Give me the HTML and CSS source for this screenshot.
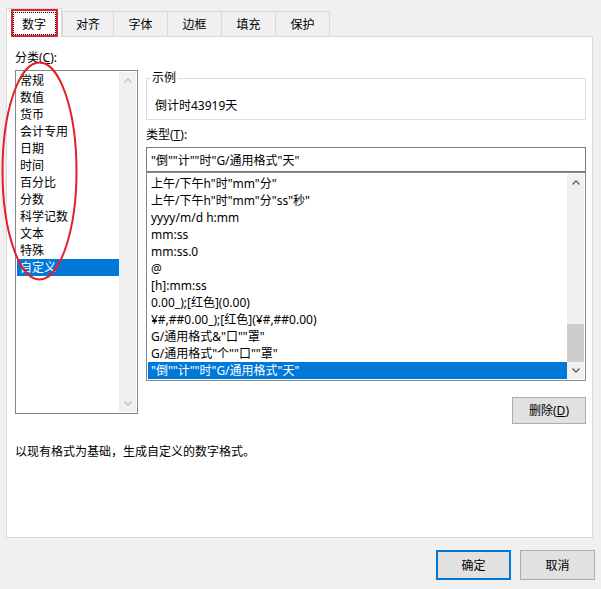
FILE: index.html
```html
<!DOCTYPE html>
<html lang="zh-CN">
<head>
    <meta charset="UTF-8"/>
    <title>设置单元格格式</title>
    <link rel="stylesheet" href="styles.css">
</head>
<body>

<div class="dialog">
    <div class="tabs">
        <div class="tab active">
            数字
            <span class="focus-rect"></span>
            <span class="mark-rect"></span>
        </div>
        <div class="tab">对齐</div>
        <div class="tab">字体</div>
        <div class="tab">边框</div>
        <div class="tab">填充</div>
        <div class="tab">保护</div>
    </div>

    <div class="panel">
        <div class="field-label cat-label">分类(<u>C</u>):</div>
        <div class="panel-body">
            <div class="listbox category-list">
                <ul class="items">
                    <li>常规</li>
                    <li>数值</li>
                    <li>货币</li>
                    <li>会计专用</li>
                    <li>日期</li>
                    <li>时间</li>
                    <li>百分比</li>
                    <li>分数</li>
                    <li>科学记数</li>
                    <li>文本</li>
                    <li>特殊</li>
                    <li class="selected">自定义</li>
                </ul>
                <div class="scrollbar disabled">
                    <div class="sb-btn">
                        <svg width="8" height="5" viewBox="0 0 8 5"><polyline points="0.5,4.5 4,1 7.5,4.5"/></svg>
                    </div>
                    <div class="sb-track"></div>
                    <div class="sb-btn">
                        <svg width="8" height="5" viewBox="0 0 8 5"><polyline points="0.5,0.5 4,4 7.5,0.5"/></svg>
                    </div>
                </div>
            </div>

            <div class="right-col">
                <fieldset class="sample">
                    <legend>示例</legend>
                    <div class="sample-text">倒计时43919天</div>
                </fieldset>

                <div class="field-label type-label">类型(<u>T</u>):</div>
                <input class="type-input" type="text" value='"倒""计""时"G/通用格式"天"'/>

                <div class="listbox type-list">
                    <ul class="items">
                        <li>上午/下午h"时"mm"分"</li>
                        <li>上午/下午h"时"mm"分"ss"秒"</li>
                        <li>yyyy/m/d h:mm</li>
                        <li>mm:ss</li>
                        <li>mm:ss.0</li>
                        <li>@</li>
                        <li>[h]:mm:ss</li>
                        <li>0.00_);[红色](0.00)</li>
                        <li>¥#,##0.00_);[红色](¥#,##0.00)</li>
                        <li>G/通用格式&amp;"口""罩"</li>
                        <li>G/通用格式"个""口""罩"</li>
                        <li class="selected">"倒""计""时"G/通用格式"天"</li>
                    </ul>
                    <div class="scrollbar">
                        <div class="sb-btn">
                            <svg width="8" height="5" viewBox="0 0 8 5"><polyline points="0.5,4.5 4,1 7.5,4.5"/></svg>
                        </div>
                        <div class="sb-track"></div>
                        <div class="sb-thumb"></div>
                        <div class="sb-btn">
                            <svg width="8" height="5" viewBox="0 0 8 5"><polyline points="0.5,0.5 4,4 7.5,0.5"/></svg>
                        </div>
                    </div>
                </div>

                <div class="delete-row">
                    <button class="btn" type="button">删除(<u>D</u>)</button>
                </div>
            </div>
        </div>

        <p class="hint">以现有格式为基础，生成自定义的数字格式。</p>

        <!-- red hand-drawn annotation round the category list -->
        <svg class="mark-ellipse" width="80" height="224" viewBox="0 0 80 224">
            <ellipse cx="38.5" cy="110" rx="37" ry="108.5"/>
        </svg>
    </div>

    <div class="footer">
        <button class="btn primary" type="button">确定</button>
        <button class="btn" type="button">取消</button>
    </div>
</div>

</body>
</html>
```

FILE: styles.css
```css
body {
  margin: 0;
  background: #f0f0f0;
  font-family: "Noto Sans", "Noto Sans CJK SC", sans-serif;
  font-size: 12px;
  line-height: 17px;
  color: #000;
}
.dialog {
  width: 601px;
  height: 589px;
}

/* tabs */
.tabs {
  display: flex;
  align-items: flex-end;
  height: 28px;
  padding: 8px 0 0 6px;
}
.tab {
  box-sizing: border-box;
  width: 55px;
  height: 25px;
  margin-left: -1px;
  padding-top: 4px;
  border: 1px solid #d9d9d9;
  border-bottom: none;
  background: #f0f0f0;
  text-align: center;
}
.tab.active {
  position: relative;
  z-index: 1;
  width: 56px;
  height: 29px;
  margin-left: 0;
  margin-bottom: -1px;
  padding-top: 7px;
  background: #fff;
}
.tab.active + .tab {
  width: 52px;
  margin-left: 0;
}
.focus-rect {
  position: absolute;
  left: 6px;
  top: 3px;
  width: 43px;
  height: 23px;
  box-sizing: border-box;
  border: 1px dotted #000;
}
.mark-rect {
  position: absolute;
  left: 4px;
  top: 0;
  width: 47px;
  height: 28px;
  box-sizing: border-box;
  border: 2px solid #e3202a;
}

/* panel */
.panel {
  position: relative;
  box-sizing: border-box;
  width: 587px;
  height: 502px;
  margin-left: 6px;
  padding: 12px 6px 0 8px;
  border: 1px solid #d9d9d9;
  background: #fff;
}
.field-label u,
.btn u {
  text-decoration: underline;
  text-underline-offset: 1px;
}
.cat-label {
  margin-bottom: 4px;
}
.panel-body {
  display: flex;
  gap: 8px;
}

/* list boxes */
.listbox {
  box-sizing: border-box;
  display: flex;
  flex-shrink: 0;
  padding: 1px;
  border: 1px solid #828790;
  background: #fff;
}
.category-list {
  width: 123px;
  height: 344px;
}
.type-list {
  width: 440px;
  height: 209px;
}
.items {
  flex: 1;
  margin: 0;
  padding: 0;
  list-style: none;
  overflow: hidden;
}
.type-list .items {
  padding-top: 1px;
}
.items li {
  height: 17px;
  padding-left: 3px;
  white-space: nowrap;
}
.items li.selected {
  background: #0078d7;
  color: #fff;
}
.scrollbar {
  display: flex;
  flex-direction: column;
  width: 17px;
  background: #f0f0f0;
}
.sb-btn {
  display: flex;
  align-items: center;
  justify-content: center;
  height: 17px;
}
.sb-btn polyline {
  fill: none;
  stroke: #606060;
  stroke-width: 1.4;
}
.scrollbar.disabled .sb-btn polyline {
  stroke: #c0c0c0;
}
.sb-track {
  flex: 1;
}
.sb-thumb {
  height: 38px;
  background: #cdcdcd;
}

/* right column */
.right-col {
  width: 440px;
  flex-shrink: 0;
}
.sample {
  box-sizing: border-box;
  height: 50px;
  margin: 0;
  padding: 0 8px;
  border: 1px solid #dcdcdc;
}
.sample legend {
  margin-left: -5px;
  padding: 0 2px;
  line-height: 16px;
}
.sample-text {
  margin-top: 11px;
}
.type-label {
  margin-top: 6px;
  margin-bottom: 4px;
}
.type-input {
  display: block;
  box-sizing: border-box;
  width: 440px;
  height: 25px;
  margin: 0;
  padding: 0 4px;
  border: 1px solid #7a7a7a;
  font: inherit;
  color: #000;
  outline: none;
}
.delete-row {
  display: flex;
  justify-content: flex-end;
  margin-top: 16px;
}
.btn {
  box-sizing: border-box;
  width: 74px;
  height: 27px;
  padding: 0;
  border: 1px solid #adadad;
  background: #e1e1e1;
  font: inherit;
  color: #000;
}
.hint {
  margin: 19px 0 0;
}
.mark-ellipse {
  position: absolute;
  left: -6px;
  top: 24px;
  pointer-events: none;
}
.mark-ellipse ellipse {
  fill: none;
  stroke: #e3202a;
  stroke-width: 2;
}

/* footer buttons */
.footer {
  display: flex;
  justify-content: flex-end;
  gap: 9px;
  padding: 12px 6px 0 0;
}
.footer .btn {
  width: 75px;
  height: 30px;
}
.btn.primary {
  border: 2px solid #0078d7;
}
```
